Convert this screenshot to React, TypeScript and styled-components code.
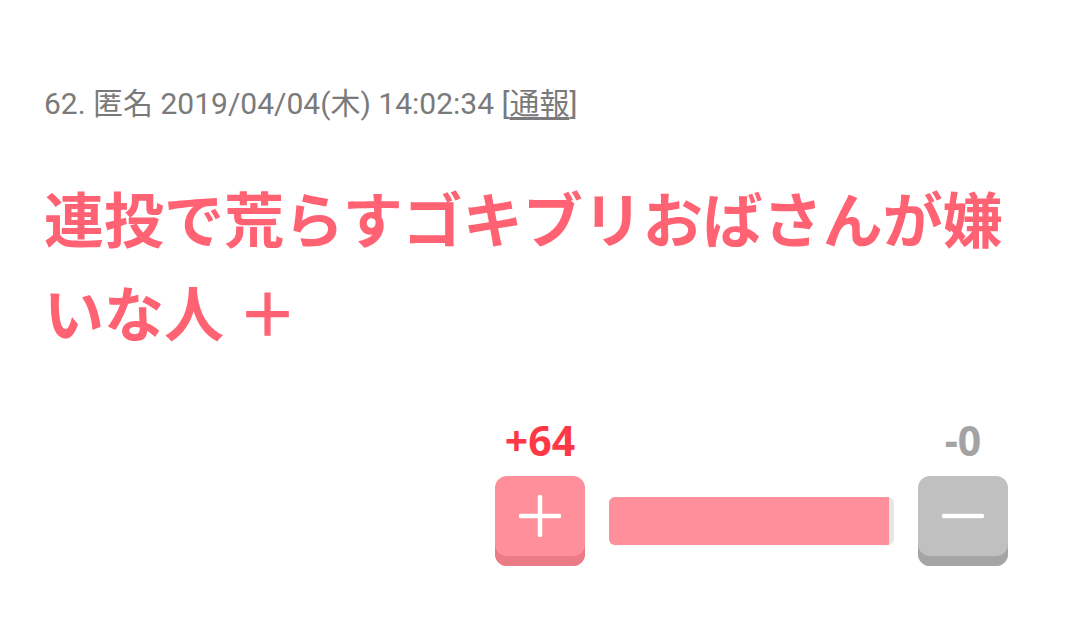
import React from "react";
import styled, { createGlobalStyle } from "styled-components";

const GlobalStyle = createGlobalStyle`
	html, body {
		margin: 0;
		padding: 0;
		background: #ffffff;
	}
	body {
		font-family: Roboto, "Noto Sans CJK JP", sans-serif;
	}
`;

const Page = styled.div`
	width: 1080px;
	height: 620px;
	box-sizing: border-box;
	padding: 88px 72px 0 44px;
`;

const Meta = styled.div`
	font-size: 30px;
	line-height: 32px;
	color: #7a7a7a;

	a {
		color: #7a7a7a;
		text-decoration: underline;
		text-underline-offset: 3px;
	}
`;

const Headline = styled.h1`
	margin: 50px 0 0;
	font-family: "Noto Sans CJK JP", sans-serif;
	font-size: 60px;
	font-weight: 700;
	line-height: 94px;
	color: #ff6272;
`;

const Vote = styled.div`
	margin: 60px 0 0 auto;
	width: 513px;
	display: grid;
	grid-template-columns: 90px 1fr 90px;
	column-gap: 24px;
	row-gap: 14px;
	align-items: center;
`;

const Count = styled.div<{ $tone: "plus" | "minus" }>`
	text-align: center;
	font-family: "Noto Sans", Roboto, sans-serif;
	font-size: 41px;
	font-weight: 700;
	line-height: 44px;
	color: ${({ $tone }) => ($tone === "plus" ? "#ff3848" : "#a3a3a3")};
`;

const VoteButton = styled.button<{ $tone: "plus" | "minus" }>`
	width: 90px;
	height: 90px;
	border: none;
	padding: 0 0 10px;
	border-radius: 12px;
	background: ${({ $tone }) => ($tone === "plus" ? "#ff8f9b" : "#c0c0c0")};
	box-shadow: inset 0 -10px 0 ${({ $tone }) => ($tone === "plus" ? "#ea7b87" : "#a5a5a5")};
	display: flex;
	align-items: center;
	justify-content: center;
	cursor: pointer;
`;

const Bar = styled.div`
	height: 48px;
	border-radius: 6px;
	background: #e6e6e6;
	overflow: hidden;
	display: flex;
`;

const BarFill = styled.div`
	height: 100%;
	background: #ff8f9b;
`;

const Spacer = styled.div``;

const PlusIcon = () => (
	<svg width="42" height="42" viewBox="0 0 42 42">
		<path d="M21 2v38M2 21h38" stroke="#fff" strokeWidth="4.5" strokeLinecap="round" />
	</svg>
);

const MinusIcon = () => (
	<svg width="42" height="42" viewBox="0 0 42 42">
		<path d="M2 21h38" stroke="#fff" strokeWidth="4.5" strokeLinecap="round" />
	</svg>
);

export default function App() {
	const plus = 64;
	const minus = 0;
	const ratio = plus + minus === 0 ? 0.5 : plus / (plus + minus);

	return (
		<>
			<GlobalStyle />
			<Page>
				<Meta>
					62. 匿名 2019/04/04(木) 14:02:34 [<a href="#">通報</a>]
				</Meta>
				<Headline>
					連投で荒らすゴキブリおばさんが嫌
					<br />
					いな人 ＋
				</Headline>
				<Vote>
					<Count $tone="plus">+{plus}</Count>
					<Spacer />
					<Count $tone="minus">-{minus}</Count>
					<VoteButton $tone="plus" aria-label="plus">
						<PlusIcon />
					</VoteButton>
					<Bar>
						<BarFill style={{ width: `calc(${ratio * 100}% - 5px)` }} />
					</Bar>
					<VoteButton $tone="minus" aria-label="minus">
						<MinusIcon />
					</VoteButton>
				</Vote>
			</Page>
		</>
	);
}
